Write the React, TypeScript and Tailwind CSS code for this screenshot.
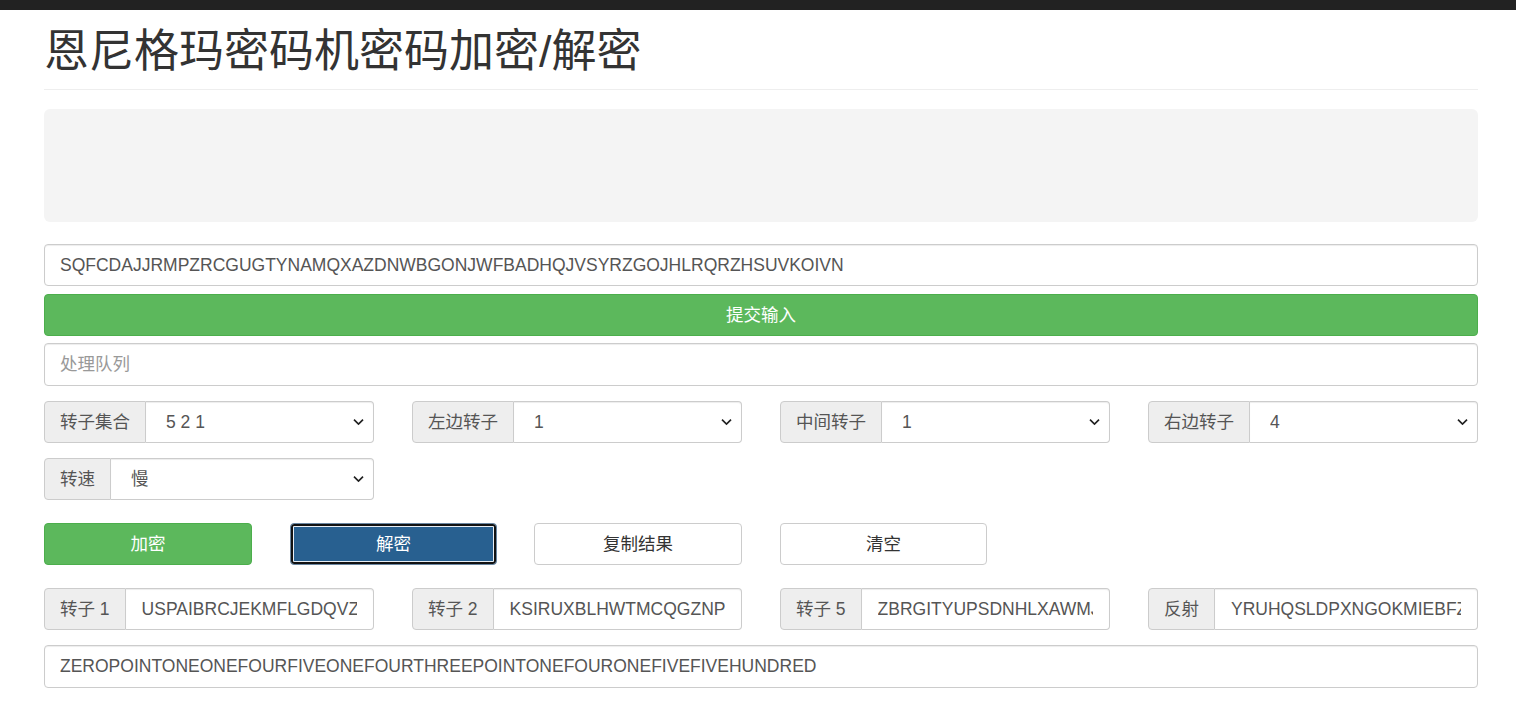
import React from "react";

const font = { fontFamily: '"Liberation Sans", "Noto Sans CJK SC", sans-serif' };

function Chevron() {
  return (
    <svg
      className="pointer-events-none absolute right-[10px] top-1/2 -translate-y-1/2"
      width="11"
      height="7"
      viewBox="0 0 11 7"
    >
      <path d="M1 1.2 L5.5 5.5 L10 1.2" fill="none" stroke="#222" strokeWidth="1.7" />
    </svg>
  );
}

function SelectGroup({ label, value }: { label: string; value: string }) {
  return (
    <div className="flex h-[42px] w-full">
      <span className="flex items-center whitespace-nowrap rounded-l-[4px] border border-[#ccc] bg-[#eee] px-[15px] text-[17.5px] text-[#555]">
        {label}
      </span>
      <div className="relative flex-1 min-w-0">
        <select
          defaultValue={value}
          className="h-full w-full appearance-none rounded-r-[4px] border border-l-0 border-[#ccc] bg-white pl-[20px] pr-[30px] text-[17.5px] text-[#555] shadow-[inset_0_1px_1px_rgba(0,0,0,0.075)] outline-none"
          style={font}
        >
          <option value={value}>{value}</option>
        </select>
        <Chevron />
      </div>
    </div>
  );
}

function TextGroup({ label, value }: { label: string; value: string }) {
  return (
    <div className="flex h-[42px] w-full">
      <span className="flex items-center whitespace-nowrap rounded-l-[4px] border border-[#ccc] bg-[#eee] px-[15px] text-[17.5px] text-[#555]">
        {label}
      </span>
      <input
        readOnly
        value={value}
        className="h-full min-w-0 flex-1 rounded-r-[4px] border border-l-0 border-[#ccc] bg-white px-[16px] text-[17.5px] text-[#555] shadow-[inset_0_1px_1px_rgba(0,0,0,0.075)] outline-none"
        style={font}
      />
    </div>
  );
}

export default function App() {
  return (
    <div className="min-h-[710px] bg-white text-[#333]" style={font}>
      <div className="h-[10px] bg-[#222]" />
      <div className="pl-[44px] pr-[38px]">
        <h1 className="mt-[17px] border-b border-[#eee] pb-[12px] text-[45px] font-normal leading-[50px] text-[#333]">
          恩尼格玛密码机密码加密/解密
        </h1>
        <div className="mt-[19px] h-[113px] rounded-[6px] bg-[#f4f4f4]" />
        <input
          readOnly
          value="SQFCDAJJRMPZRCGUGTYNAMQXAZDNWBGONJWFBADHQJVSYRZGOJHLRQRZHSUVKOIVN"
          className="mt-[22px] block h-[42px] w-full rounded-[4px] border border-[#ccc] bg-white px-[15px] text-[17.5px] text-[#555] shadow-[inset_0_1px_1px_rgba(0,0,0,0.075)] outline-none"
          style={font}
        />
        <button
          className="mt-[8px] block h-[42px] w-full rounded-[4px] border border-[#4cae4c] bg-[#5cb85c] text-[17.5px] text-white"
          style={font}
        >
          提交输入
        </button>
        <input
          readOnly
          placeholder="处理队列"
          className="mt-[7px] block h-[43px] w-full rounded-[4px] border border-[#ccc] bg-white px-[15px] text-[17.5px] text-[#555] placeholder:text-[#999] shadow-[inset_0_1px_1px_rgba(0,0,0,0.075)] outline-none"
          style={font}
        />
        <div className="mt-[15px] grid grid-cols-4 gap-x-[38px] gap-y-[15px]">
          <SelectGroup label="转子集合" value="5 2 1" />
          <SelectGroup label="左边转子" value="1" />
          <SelectGroup label="中间转子" value="1" />
          <SelectGroup label="右边转子" value="4" />
          <SelectGroup label="转速" value="慢" />
        </div>
        <div className="mt-[23px] flex">
          <button
            className="h-[42px] w-[208px] rounded-[4px] border border-[#4cae4c] bg-[#5cb85c] text-[17.5px] text-white"
            style={font}
          >
            加密
          </button>
          <button
            className="ml-[38px] h-[42px] w-[207px] rounded-[4px] border border-[#6a86a0] bg-[#286090] text-[17.5px] text-white shadow-[inset_0_0_0_2px_#111,inset_0_0_0_3px_#e8eef4]"
            style={font}
          >
            解密
          </button>
          <button
            className="ml-[37px] h-[42px] w-[208px] rounded-[4px] border border-[#ccc] bg-white text-[17.5px] text-[#333]"
            style={font}
          >
            复制结果
          </button>
          <button
            className="ml-[38px] h-[42px] w-[207px] rounded-[4px] border border-[#ccc] bg-white text-[17.5px] text-[#333]"
            style={font}
          >
            清空
          </button>
        </div>
        <div className="mt-[23px] grid grid-cols-4 gap-x-[38px]">
          <TextGroup label="转子 1" value="USPAIBRCJEKMFLGDQVZNTOWYHX" />
          <TextGroup label="转子 2" value="KSIRUXBLHWTMCQGZNPYFVOEAJD" />
          <TextGroup label="转子 5" value="ZBRGITYUPSDNHLXAWMJQOFECKV" />
          <TextGroup label="反射" value="YRUHQSLDPXNGOKMIEBFZCWVJAT" />
        </div>
        <input
          readOnly
          value="ZEROPOINTONEONEFOURFIVEONEFOURTHREEPOINTONEFOURONEFIVEFIVEHUNDRED"
          className="mt-[15px] block h-[43px] w-full rounded-[4px] border border-[#ccc] bg-white px-[15px] text-[17.5px] text-[#555] shadow-[inset_0_1px_1px_rgba(0,0,0,0.075)] outline-none"
          style={font}
        />
      </div>
    </div>
  );
}
